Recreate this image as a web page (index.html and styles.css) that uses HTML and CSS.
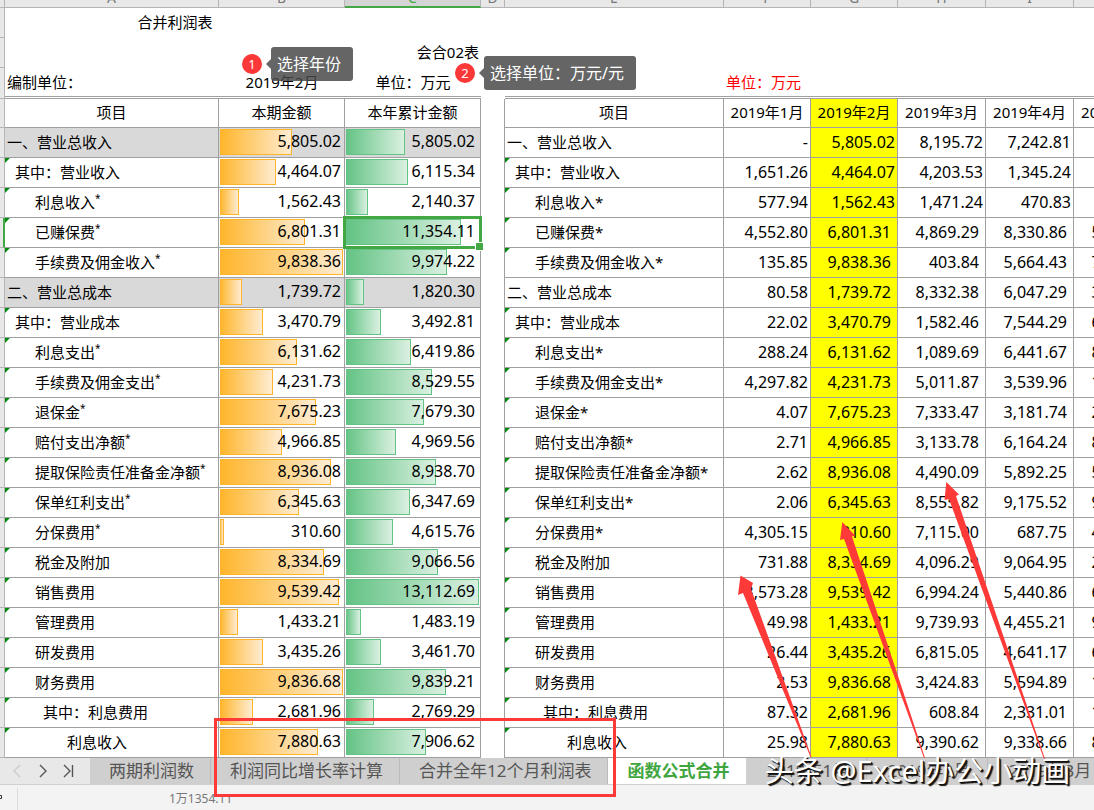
FILE: index.html
```html
<!DOCTYPE html>
<html lang="zh-CN">
<head>
<meta charset="utf-8">
<title>合并利润表</title>
<link rel="stylesheet" href="styles.css">
</head>
<body>
<main class="sheet">
  <table class="grid">
    <colgroup>
      <col class="w-head"><col class="w-a"><col class="w-b"><col class="w-c"><col class="w-d"><col class="w-e">
      <col class="w-f"><col class="w-f"><col class="w-h"><col class="w-h"><col class="w-h">
    </colgroup>
    <thead>
      <tr class="letters">
        <th></th>
        <th><div>A</div></th><th><div>B</div></th><th class="current"><div>C</div></th><th><div>D</div></th><th><div>E</div></th>
        <th><div>F</div></th><th><div>G</div></th><th><div>H</div></th><th><div>I</div></th><th><div>J</div></th>
      </tr>
    </thead>
    <tbody id="rows">
      <tr class="plain"><th></th><td colspan="2" class="center">合并利润表</td><td colspan="8"></td></tr>
      <tr class="plain"><th></th><td colspan="2"></td><td class="right">会合02表</td><td colspan="7"></td></tr>
      <tr class="caption"><th></th><td class="left">编制单位：</td><td class="center">2019年2月</td><td class="center">单位：万元</td><td class="gap"></td><td></td><td class="left red" colspan="5">单位：万元</td></tr>
      <tr class="titles"><th></th><td>项目</td><td>本期金额</td><td>本年累计金额</td><td class="gap"></td><td>项目</td><td>2019年1月</td><td class="picked">2019年2月</td><td>2019年3月</td><td>2019年4月</td><td>2019年5月</td></tr>
    </tbody>
  </table>
</main>
<nav class="tabs">
  <div class="steps">
    <button type="button" class="off" aria-label="上一个"><svg width="10" height="14" viewBox="0 0 10 14"><path d="M8 1 2 7l6 6"/></svg></button>
    <button type="button" aria-label="下一个"><svg width="10" height="14" viewBox="0 0 10 14"><path d="M2 1l6 6-6 6"/></svg></button>
    <button type="button" aria-label="最后一个"><svg width="12" height="14" viewBox="0 0 12 14"><path d="M2 1l6 6-6 6M10.500 1v12"/></svg></button>
  </div>
  <button type="button" class="tab">两期利润数</button>
  <button type="button" class="tab">利润同比增长率计算</button>
  <button type="button" class="tab">合并全年12个月利润表</button>
  <button type="button" class="tab active">函数公式合并</button>
  <button type="button" class="tab">2019年1月</button>
  <button type="button" class="tab">2019年2月</button>
  <button type="button" class="tab">2019年3月</button>
</nav>
<footer class="status"><span class="mode"><svg width="3" height="8" viewBox="0 0 3 8"><path d="M0 1.500h1.500v3H0"/></svg></span><span class="value">1万1354.11</span></footer>

<div class="note note-year"><span class="dot">1</span><span class="tip">选择年份</span></div>
<div class="note note-unit"><span class="dot">2</span><span class="tip">选择单位：万元/元</span></div>
<div class="frame"></div>
<svg class="arrows" width="320" height="290" viewBox="730 475 320 290">
  <path d="M740.500 575.500 753 583l-2 6L811.500 757h-1L743 593l-5 2z"/>
  <path d="M842.300 522 855 535.500l-3 1L925 758h-1L844 539l-4 1z"/>
  <path d="M946.300 482 959 494.500l-3 1.500L1045 759h-1L949 499l-4.500 1z"/>
</svg>
<div class="watermark">头条 @Excel办公小动画</div>
<script src="script.js"></script>
</body>
</html>
```
FILE: styles.css
```css
* { box-sizing: border-box; }
body {
  margin: 0;
  position: relative;
  min-height: 100vh;
  display: flex;
  flex-direction: column;
  overflow: hidden;
  background: #f3f3f3;
  color: #000;
  font: 15px/20px "Noto Sans", "Noto Sans CJK SC", sans-serif;
}
.sheet { overflow: hidden; background: #fff; }
.grid { width: 1162px; table-layout: fixed; border-collapse: separate; border-spacing: 0; }
.w-head { width: 5px; }
.w-a { width: 214px; }
.w-b { width: 126px; }
.w-c { width: 136px; }
.w-d { width: 24px; }
.w-e { width: 219px; }
.w-f { width: 87px; }
.w-h { width: 88px; }
.grid th, .grid td { padding: 0; height: 30px; font-weight: 400; white-space: nowrap; }
.grid td { padding-bottom: 2px; }
.grid th { background: #e8e8e8; border: 0 solid #b5b5b5; border-width: 0 1px 1px 0; }
.grid .letters th { height: 8px; }
.letters div {
  height: 7px;
  display: flex;
  justify-content: center;
  align-items: flex-end;
  overflow: hidden;
  padding-bottom: 2px;
  font-size: 14px;
  line-height: 14px;
  color: #777;
}
.grid .letters .current { background: #d4d4d4; border-bottom: 2px solid #43a843; }
.letters .current div { height: 6px; padding-bottom: 1px; color: #43a843; }
.center { text-align: center; }
.grid .right { text-align: right; padding-right: 2px; }
.grid .left { padding-left: 2px; }
.red { color: #f00; }
.grid .caption th, .grid .caption td { height: 31px; }
.grid .caption td { padding-bottom: 0; }
.caption td { border-bottom: 3px double #a0a0a0; }
.grid .titles th, .grid .titles td { height: 29px; }
.titles td { text-align: center; }
.titles td, .data td { border: 0 solid #a0a0a0; border-width: 0 1px 1px 0; }
.grid .gap { border-bottom: 0; }
.picked { background: #ff0; }
.total .mine { background: #d9d9d9; }
.flag {
  background: linear-gradient(135deg, #008a10 3px, transparent 4px) no-repeat;
}
.grid .in0 { padding-left: 2px; }
.grid .in1 { padding-left: 10px; }
.grid .in2 { padding-left: 30px; }
.grid .in3 { padding-left: 38px; }
.grid .in4 { padding-left: 62px; }
.star { font-size: 10px; line-height: 10px; vertical-align: 6px; }
.num { text-align: right; font-size: 16px; }
.grid .pad2 { padding-right: 2px; }
.grid .pad6 { padding-right: 6px; }
.grid .num.mine { padding: 0; }
.cell { display: grid; height: 29px; padding-left: 1px; }
.cell > * { grid-area: 1 / 1; }
.cell .amount { padding-right: 3px; line-height: 27px; }
.green .amount { padding-right: 5px; }
.bar { height: 26px; margin-top: 1px; border: 1px solid #ffb42b; border-left: 0; background: linear-gradient(90deg, #ffb52a, #feecd2); }
.green .bar { border-color: #63c384; background: linear-gradient(90deg, #63c384, #daf0e1); }
.selected { position: relative; }
.outline { position: absolute; inset: -2px; border: 3px solid #43a843; z-index: 1; }
.outline::after {
  content: "";
  position: absolute;
  right: -5px;
  bottom: -5px;
  width: 7px;
  height: 7px;
  background: #43a843;
  border: 1px solid #fff;
}
.data .current { border-right: 2px solid #43a843; }

.tabs { display: flex; height: 27px; overflow: hidden; background: #e8e8e8; border-bottom: 1px solid #d0d0d0; }
.steps { display: flex; flex: none; width: 90px; padding-left: 12px; gap: 16px; align-items: center; }
.steps button { border: 0; padding: 0; background: none; display: flex; }
.steps button:last-child { margin-left: -2px; }
.steps path { fill: none; stroke: #555; stroke-width: 1.4; }
.steps .off path { stroke: #ccc; }
.tab {
  flex: none;
  min-width: 121px;
  border: 0;
  border-right: 1px solid #bbb;
  padding: 0 16px 0 19px;
  background: #cfcfcf;
  color: #555;
  font: 17px/26px "Noto Sans", "Noto Sans CJK SC", sans-serif;
  white-space: nowrap;
}
.tab.active { background: #fff; color: #3fa63f; font-weight: 700; border-color: #fff; }
.status { display: flex; align-items: stretch; height: 26px; padding-top: 3px; color: #777; font-size: 12px; }
.mode { width: 18px; padding-top: 6px; border-right: 1px solid #ddd; line-height: 0; }
.mode path { fill: none; stroke: #333; }
.value { padding: 1px 0 0 151px; }

.note { position: absolute; display: flex; align-items: center; gap: 9px; color: #fff; }
.note-year { left: 242px; top: 47px; }
.note-unit { left: 455px; top: 56px; }
.dot { width: 20px; height: 20px; border-radius: 50%; background: #fb3838; font-size: 13px; text-align: center; }
.tip { position: relative; height: 34px; padding: 0 12px 0 6px; border-radius: 3px; background: rgba(72, 72, 72, .84); font-size: 16px; line-height: 34px; white-space: nowrap; }
.tip::before {
  content: "";
  position: absolute;
  left: -5px;
  top: 12px;
  border: 5px solid transparent;
  border-left: 0;
  border-right-color: #666;
}
.frame { position: absolute; left: 214px; top: 718px; width: 402px; height: 79px; border: 3px solid #fd3a38; }
.arrows { position: absolute; left: 730px; top: 475px; fill: #fd3a38; }
.watermark {
  position: absolute;
  left: 765px;
  top: 753px;
  color: #fff;
  font-size: 29px;
  line-height: 36px;
  white-space: nowrap;
  text-shadow: 1px 1px 0 #111, 2px 2px 1px #111;
}
```
FILE: script.js
```js
// label, indent level, starred, current, cumulative, Jan, Feb, Mar, Apr, May
const items = [
  ["一、营业总收入", 0, 0, "5,805.02", "5,805.02", "-", "5,805.02", "8,195.72", "7,242.81", "6,120.45"],
  ["其中：营业收入", 1, 0, "4,464.07", "6,115.34", "1,651.26", "4,464.07", "4,203.53", "1,345.24", "2,318.06"],
  ["利息收入", 2, 1, "1,562.43", "2,140.37", "577.94", "1,562.43", "1,471.24", "470.83", "3,802.39"],
  ["已赚保费", 2, 1, "6,801.31", "11,354.11", "4,552.80", "6,801.31", "4,869.29", "8,330.86", "5,214.60"],
  ["手续费及佣金收入", 2, 1, "9,838.36", "9,974.22", "135.85", "9,838.36", "403.84", "5,664.43", "7,431.18"],
  ["二、营业总成本", 0, 0, "1,739.72", "1,820.30", "80.58", "1,739.72", "8,332.38", "6,047.29", "3,905.27"],
  ["其中：营业成本", 1, 0, "3,470.79", "3,492.81", "22.02", "3,470.79", "1,582.46", "7,544.29", "6,083.52"],
  ["利息支出", 2, 1, "6,131.62", "6,419.86", "288.24", "6,131.62", "1,089.69", "6,441.67", "8,265.40"],
  ["手续费及佣金支出", 2, 1, "4,231.73", "8,529.55", "4,297.82", "4,231.73", "5,011.87", "3,539.96", "1,720.35"],
  ["退保金", 2, 1, "7,675.23", "7,679.30", "4.07", "7,675.23", "7,333.47", "3,181.74", "2,946.08"],
  ["赔付支出净额", 2, 1, "4,966.85", "4,969.56", "2.71", "4,966.85", "3,133.78", "6,164.24", "8,057.93"],
  ["提取保险责任准备金净额", 2, 1, "8,936.08", "8,938.70", "2.62", "8,936.08", "4,490.09", "5,892.25", "5,371.64"],
  ["保单红利支出", 2, 1, "6,345.63", "6,347.69", "2.06", "6,345.63", "8,555.82", "9,175.52", "9,420.16"],
  ["分保费用", 2, 1, "310.60", "4,615.76", "4,305.15", "310.60", "7,115.00", "687.75", "4,308.72"],
  ["税金及附加", 2, 0, "8,334.69", "9,066.56", "731.88", "8,334.69", "4,096.29", "9,064.95", "2,653.07"],
  ["销售费用", 2, 0, "9,539.42", "13,112.69", "3,573.28", "9,539.42", "6,994.24", "5,440.86", "6,817.34"],
  ["管理费用", 2, 0, "1,433.21", "1,483.19", "49.98", "1,433.21", "9,739.93", "4,455.21", "9,206.58"],
  ["研发费用", 2, 0, "3,435.26", "3,461.70", "26.44", "3,435.26", "6,815.05", "4,641.17", "6,540.91"],
  ["财务费用", 2, 0, "9,836.68", "9,839.21", "2.53", "9,836.68", "3,424.83", "5,594.89", "1,375.20"],
  ["其中：利息费用", 3, 0, "2,681.96", "2,769.29", "87.32", "2,681.96", "608.84", "2,331.01", "1,864.43"],
  ["利息收入", 4, 0, "7,880.63", "7,906.62", "25.98", "7,880.63", "9,390.62", "9,338.66", "8,129.75"]
];

const value = (text) => Number(text.replace(/,/g, ""));
const maxOf = (column) => Math.max(...items.map((item) => value(item[column])));
const peak = { 3: maxOf(3), 4: maxOf(4) };
const selectedRow = 3;

function barCell(item, column, color, selected) {
  const width = (value(item[column]) / peak[column]) * 99;
  return `<td class="num mine ${selected ? "selected" : ""}">
    <div class="cell ${color}"><div class="bar" style="width:${width.toFixed(1)}%"></div><span class="amount">${item[column]}</span></div>
    ${selected ? '<div class="outline"></div>' : ""}</td>`;
}

document.getElementById("rows").insertAdjacentHTML("beforeend", items.map((item, i) => {
  const [label, indent, starred] = item;
  const flag = indent ? "flag" : "";
  const pad = i < 3 ? "pad2" : "pad6";
  return `<tr class="data ${indent ? "" : "total"}">
    <th class="${i === selectedRow ? "current" : ""}"></th>
    <td class="mine ${flag} in${indent}">${label}${starred ? '<span class="star">*</span>' : ""}</td>
    ${barCell(item, 3, "", false)}
    ${barCell(item, 4, "green", i === selectedRow)}
    <td class="gap"></td>
    <td class="${flag} in${indent}">${label}${starred ? "*" : ""}</td>
    <td class="num pad2">${item[5]}</td>
    <td class="num picked ${pad}">${item[6]}</td>
    <td class="num ${pad}">${item[7]}</td>
    <td class="num ${pad}">${item[8]}</td>
    <td class="num ${pad}">${item[9]}</td>
  </tr>`;
}).join(""));
```
